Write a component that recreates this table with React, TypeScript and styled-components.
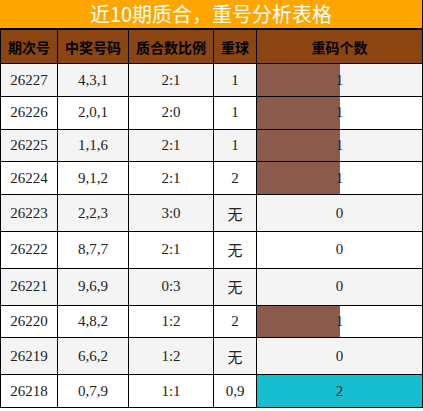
import styled, { createGlobalStyle } from "styled-components";

const GlobalStyle = createGlobalStyle`
  body {
    margin: 0;
    background: #ffffff;
  }
`;

const rows = [
  { issue: "26227", nums: "4,3,1", ratio: "2:1", repeat: "1", count: 1 },
  { issue: "26226", nums: "2,0,1", ratio: "2:0", repeat: "1", count: 1 },
  { issue: "26225", nums: "1,1,6", ratio: "2:1", repeat: "1", count: 1 },
  { issue: "26224", nums: "9,1,2", ratio: "2:1", repeat: "2", count: 1 },
  { issue: "26223", nums: "2,2,3", ratio: "3:0", repeat: "无", count: 0 },
  { issue: "26222", nums: "8,7,7", ratio: "2:1", repeat: "无", count: 0 },
  { issue: "26221", nums: "9,6,9", ratio: "0:3", repeat: "无", count: 0 },
  { issue: "26220", nums: "4,8,2", ratio: "1:2", repeat: "2", count: 1 },
  { issue: "26219", nums: "6,6,2", ratio: "1:2", repeat: "无", count: 0 },
  { issue: "26218", nums: "0,7,9", ratio: "1:1", repeat: "0,9", count: 2 },
];

const MAX_COUNT = 2;

const Table = styled.table`
  width: 423px;
  border-collapse: collapse;
  table-layout: fixed;
  font-family: "Liberation Serif", "Noto Sans CJK SC", serif;
  font-size: 15px;
  color: #222;
`;

const Title = styled.caption`
  background: #ffa500;
  color: #ffffff;
  font-family: "Noto Sans CJK SC", sans-serif;
  font-size: 20px;
  line-height: 28px;
  border-right: 1px solid #000;
  border-bottom: 1px solid #000;
`;

const HeadCell = styled.th<{ $w?: number }>`
  width: ${(p) => (p.$w ? `${p.$w}px` : "auto")};
  background: #8b4513;
  color: #000;
  font-family: "Noto Sans CJK SC", sans-serif;
  font-weight: 700;
  font-size: 14px;
  height: 33px;
  padding: 0;
  border: 1px solid #000;
`;

const Row = styled.tr<{ $alt: boolean }>`
  background: ${(p) => (p.$alt ? "#f4f4f4" : "#ffffff")};
`;

const Cell = styled.td`
  text-align: center;
  padding: 7.5px 0 7.3px;
  border: 1px solid #000;
`;

const CountCell = styled(Cell)<{ $hot: boolean }>`
  background: ${(p) => (p.$hot ? "#17becf" : "transparent")};
  background-repeat: no-repeat;
`;

export default function App() {
  return (
    <>
      <GlobalStyle />
      <Table>
        <Title>近10期质合，重号分析表格</Title>
        <thead>
          <tr>
            <HeadCell $w={56}>期次号</HeadCell>
            <HeadCell $w={70}>中奖号码</HeadCell>
            <HeadCell $w={84}>质合数比例</HeadCell>
            <HeadCell $w={42}>重球</HeadCell>
            <HeadCell>重码个数</HeadCell>
          </tr>
        </thead>
        <tbody>
          {rows.map((r, i) => {
            const hot = r.count >= MAX_COUNT;
            const pct = (r.count / MAX_COUNT) * 100;
            return (
              <Row key={r.issue} $alt={i % 2 === 0}>
                <Cell>{r.issue}</Cell>
                <Cell>{r.nums}</Cell>
                <Cell>{r.ratio}</Cell>
                <Cell>{r.repeat}</Cell>
                <CountCell
                  $hot={hot}
                  style={
                    !hot && r.count > 0
                      ? {
                          backgroundImage: `linear-gradient(to right, #8b5a4b ${pct}%, transparent ${pct}%)`,
                        }
                      : undefined
                  }
                >
                  {r.count}
                </CountCell>
              </Row>
            );
          })}
        </tbody>
      </Table>
    </>
  );
}
